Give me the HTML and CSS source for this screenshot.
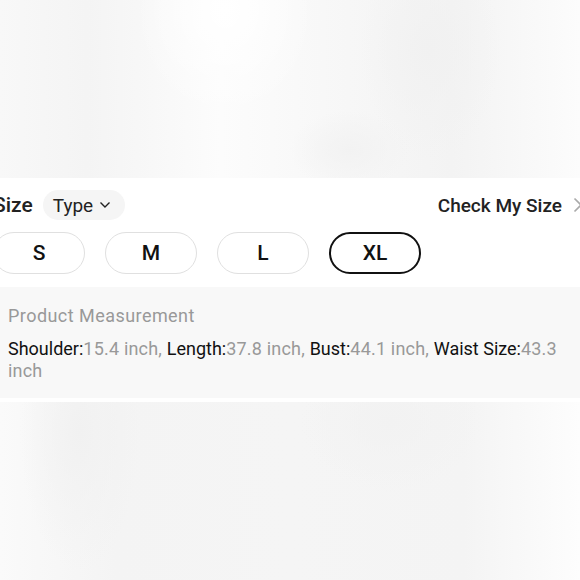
FILE: index.html
```html
<!DOCTYPE html>
<html lang="en">
  <head>
    <meta charset="UTF-8" />
    <meta name="viewport" content="width=device-width, initial-scale=1.0" />
    <title>Select Size</title>
    <link rel="stylesheet" href="styles.css">
  </head>
  <body>
    <div class="page">
      <div class="backdrop backdrop-top"></div>

      <div class="size-panel">
        <div class="size-header">
          <div class="size-title">
            <span class="size-label">Size</span>
            <button class="type-pill">
              Type
              <svg width="12" height="8" viewBox="0 0 12 8">
                <path d="M1.5 1.5 L6 6 L10.5 1.5" fill="none" stroke="#222" stroke-width="1.4" />
              </svg>
            </button>
          </div>
          <div class="check-size">
            Check My Size
            <svg width="10" height="16" viewBox="0 0 10 16">
              <path d="M1.5 1.5 L8 8 L1.5 14.5" fill="none" stroke="#aaa" stroke-width="1.6" />
            </svg>
          </div>
        </div>

        <div class="size-options">
          <button class="size-option">S</button>
          <button class="size-option">M</button>
          <button class="size-option">L</button>
          <button class="size-option selected">XL</button>
        </div>

        <div class="measurement">
          <h3>Product Measurement</h3>
          <p>
            <b>Shoulder:</b>15.4 inch, <b>Length:</b>37.8 inch,
            <b>Bust:</b>44.1 inch, <b>Waist Size:</b>43.3 inch
          </p>
        </div>
      </div>

      <div class="backdrop backdrop-bottom"></div>
    </div>
  </body>
</html>
```

FILE: styles.css
```css
body {
  margin: 0;
  font-family: Roboto, "Liberation Sans", Arial, sans-serif;
  background-color: #f6f6f6;
}
.page {
  width: 580px;
  height: 580px;
  overflow: hidden;
  display: flex;
  flex-direction: column;
}
.backdrop {
  flex-shrink: 0;
}
.backdrop-top {
  height: 178px;
  background:
    radial-gradient(ellipse 90px 110px at 225px 10px, #ffffff, rgba(255, 255, 255, 0)),
    radial-gradient(ellipse 70px 110px at 430px 50px, #f1f1f1, rgba(241, 241, 241, 0)),
    radial-gradient(ellipse 60px 40px at 350px 150px, #f2f2f2, rgba(242, 242, 242, 0)),
    linear-gradient(90deg, #f8f8f8 0%, #f4f4f4 15%, #fcfcfc 38%, #f7f7f7 60%, #f3f3f3 78%, #fcfcfc 100%);
}
.backdrop-bottom {
  flex: 1;
  background:
    radial-gradient(ellipse 60px 140px at 80px 30px, #f1f1f1, rgba(241, 241, 241, 0)),
    radial-gradient(ellipse 90px 70px at 390px 20px, #f2f2f2, rgba(242, 242, 242, 0)),
    linear-gradient(90deg, #fafafa 0%, #f4f4f4 20%, #f5f5f5 50%, #f4f4f4 80%, #fdfdfd 100%);
}
.size-panel {
  background-color: #fff;
  padding-bottom: 4px;
  flex-shrink: 0;
}
.size-header {
  height: 54px;
  display: flex;
  align-items: center;
  justify-content: space-between;
  margin-left: -7px;
  margin-right: -3px;
}
.size-title {
  display: flex;
  align-items: center;
  gap: 10px;
}
.size-label {
  font-size: 21px;
  font-weight: 500;
  color: #222;
}
.type-pill {
  display: flex;
  align-items: center;
  gap: 6px;
  height: 30px;
  padding: 0 14px 0 10px;
  border: none;
  border-radius: 15px;
  background-color: #f5f5f5;
  font-family: inherit;
  font-size: 19px;
  color: #222;
}
.check-size {
  display: flex;
  align-items: center;
  gap: 11px;
  font-size: 19px;
  font-weight: 500;
  color: #222;
}
.size-options {
  display: flex;
  gap: 20px;
  margin-left: -7px;
  padding: 0 0 13px;
}
.size-option {
  width: 92px;
  height: 42px;
  border: 1.5px solid #e0e0e0;
  border-radius: 21px;
  background-color: #fff;
  font-family: inherit;
  font-size: 21px;
  font-weight: 500;
  color: #111;
}
.size-option.selected {
  border: 2px solid #111;
}
.measurement {
  background-color: #f8f8f8;
  padding: 18px 12px 16px 8px;
}
.measurement h3 {
  margin: 0 0 11px;
  font-size: 18px;
  font-weight: 400;
  line-height: 22px;
  letter-spacing: 0.45px;
  color: #999;
}
.measurement p {
  margin: 0;
  font-size: 18px;
  line-height: 22px;
  letter-spacing: 0.2px;
  color: #999;
}
.measurement b {
  font-weight: 400;
  letter-spacing: 0;
  color: #111;
}
```
